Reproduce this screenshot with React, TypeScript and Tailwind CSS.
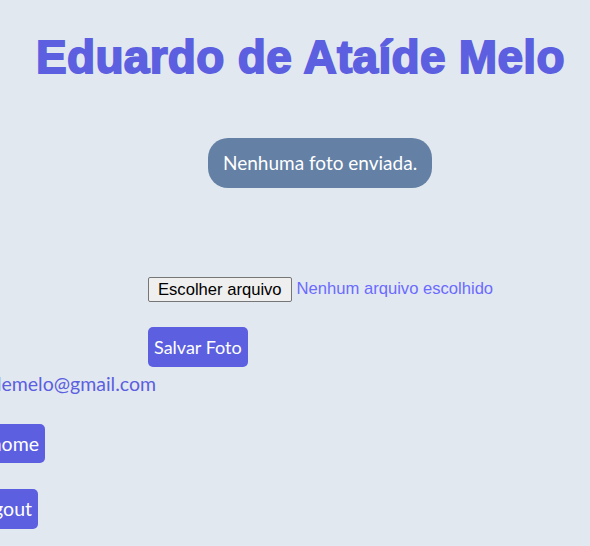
const App = () => {
    return (
        <div className="w-full h-[546px] overflow-hidden bg-[#e2e8f0] font-['Lato',sans-serif]">
            {/* Nome */}
            <h1 className="pt-[28px] pl-[36px] whitespace-nowrap text-[46px] leading-[58px] font-black text-[#5c5fe0] font-['Liberation_Sans',sans-serif] tracking-[0.3px] [-webkit-text-stroke:1.8px_#5c5fe0]">
                Eduardo de Ataíde Melo
            </h1>

            {/* Foto */}
            <div className="flex pl-[208px] mt-[52px]">
                <div className="h-[50px] px-[15px] flex items-center rounded-[20px] bg-[#6480a4] text-white text-[19px]">
                    Nenhuma foto enviada.
                </div>
            </div>

            {/* Upload */}
            <div className="flex items-center pl-[148px] mt-[89px] font-['Liberation_Sans',sans-serif] text-[16.6px]">
                <button className="h-[25px] px-[9px] bg-[#efefef] border border-[#767676] rounded-[2px] text-black">
                    Escolher arquivo
                </button>
                <span className="ml-[5px] text-[#6b6bff]">Nenhum arquivo escolhido</span>
            </div>

            <div className="pl-[148px] mt-[25px]">
                <button className="h-[40px] px-[6px] rounded-[5px] bg-[#5c5fe0] text-white text-[18px]">
                    Salvar Foto
                </button>
            </div>

            {/* Email */}
            <div className="flex justify-end w-[156px] mt-[5px] text-[19.5px] leading-[24px] text-[#5c5fe0] whitespace-nowrap">
                eduardodeataidemelo@gmail.com
            </div>

            {/* Navegação */}
            <div className="flex justify-end w-[45px] mt-[28px] whitespace-nowrap">
                <button className="h-[39px] px-[6px] rounded-[5px] bg-[#5c5fe0] text-white text-[19.5px]">
                    Voltar para home
                </button>
            </div>
            <div className="flex justify-end w-[38px] mt-[26px] whitespace-nowrap">
                <button className="h-[40px] px-[6px] rounded-[5px] bg-[#5c5fe0] text-white text-[19.5px]">
                    Fazer logout
                </button>
            </div>
        </div>
    )
}

export default App
